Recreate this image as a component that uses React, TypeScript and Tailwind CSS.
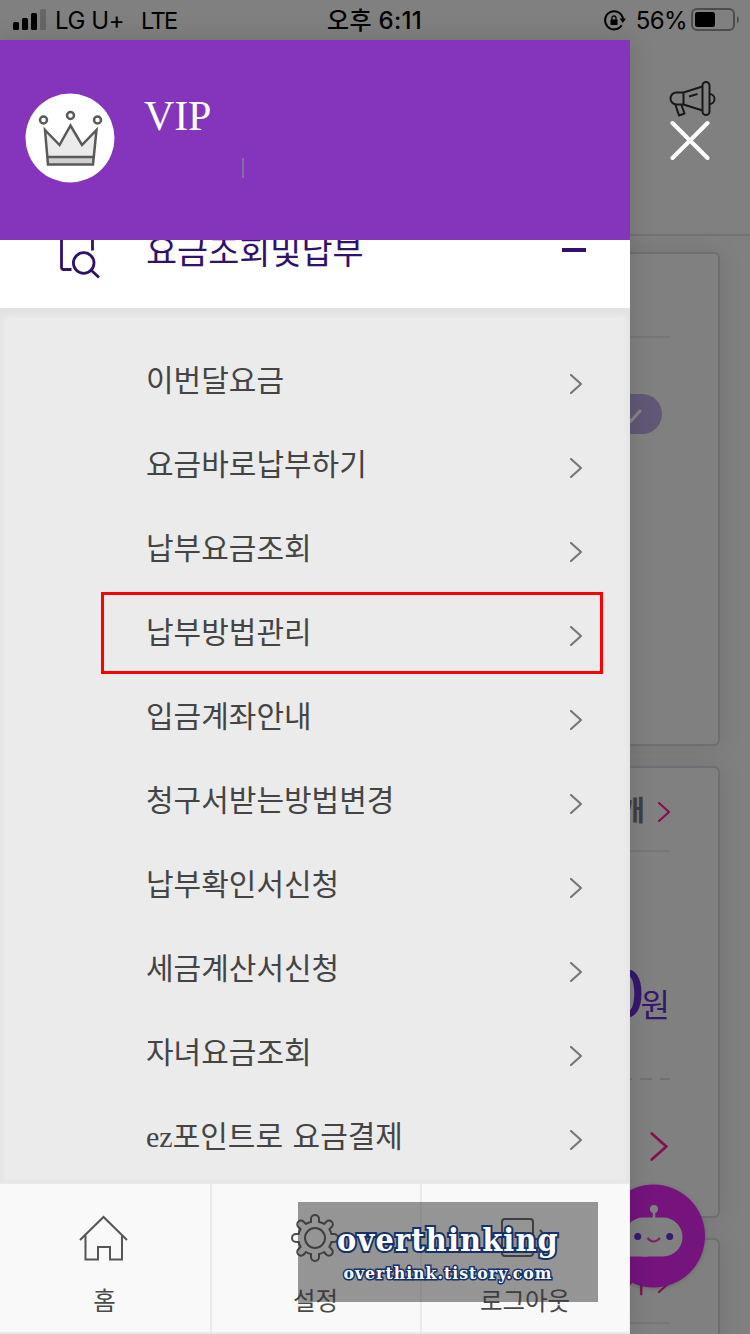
import React from 'react';

// ===== TYPE DEFINITIONS =====
interface MenuItem {
  label: string;
  highlighted?: boolean;
}

const menuItems: MenuItem[] = [
  { label: '이번달요금' },
  { label: '요금바로납부하기' },
  { label: '납부요금조회' },
  { label: '납부방법관리', highlighted: true },
  { label: '입금계좌안내' },
  { label: '청구서받는방법변경' },
  { label: '납부확인서신청' },
  { label: '세금계산서신청' },
  { label: '자녀요금조회' },
  { label: 'ez포인트로 요금결제' },
];

const Chevron: React.FC<{ className: string; strokeWidth?: number }> = ({ className, strokeWidth = 2 }) => (
  <svg viewBox="0 0 12 20" fill="none" stroke="currentColor" strokeWidth={strokeWidth} strokeLinecap="round" className={className}>
    <path d="M1 1l10 9-10 9" />
  </svg>
);

const StatusBar = () => (
  <div className="relative flex h-10 shrink-0 items-center justify-between bg-[#808080] pl-[13px] pr-[11px] font-['Inter','Noto_Sans_CJK_KR',sans-serif] text-[24px] leading-10 text-black">
    <div className="flex items-center">
      <svg width="34" height="22" viewBox="0 0 34 22" className="mr-2">
        <rect x="0" y="13" width="6" height="8" rx="1.5" />
        <rect x="9" y="9" width="6" height="12" rx="1.5" />
        <rect x="18" y="4" width="6" height="17" rx="1.5" />
        <rect x="27" y="0" width="6" height="21" rx="1.5" fill="#666" />
      </svg>
      <span className="w-[86px] pt-0.5 tracking-[-0.4px]">LG U+</span>
      <span className="pt-0.5 text-[23.5px] tracking-[-1.6px]">LTE</span>
    </div>
    <div className="absolute left-[327px] top-px whitespace-nowrap font-medium tracking-[0.3px]">오후 6:11</div>
    <div className="flex items-center">
      <svg width="22" height="22" viewBox="0 0 22 22" className="mr-[10px] mt-0.5">
        <path d="M17.7 15.2A9 9 0 1 1 19 9" fill="none" stroke="#000" strokeWidth="2" />
        <path d="M15.6 8.5h6.4l-3.200 4.600z" />
        <rect x="6.5" y="9.5" width="7" height="5.5" rx="0.8" />
        <path d="M8 10V8a2 2 0 0 1 4 0v2" fill="none" stroke="#000" strokeWidth="1.3" />
      </svg>
      <span className="mr-[4px] pt-0.5 tracking-[-0.6px]">56%</span>
      <svg width="48" height="24" viewBox="0 0 48 24">
        <rect x="1" y="1" width="42" height="21" rx="5" fill="none" stroke="#4d4d4d" strokeWidth="2" />
        <rect x="4" y="4" width="20" height="15" rx="2.5" />
        <path d="M46 8q2 1 2 3.500t-2 3.500z" fill="#4d4d4d" />
      </svg>
    </div>
  </div>
);

const CrownBadge = () => (
  <svg width="90" height="90" viewBox="0 0 90 90">
    <circle cx="45" cy="45" r="44.500" fill="#fff" />
    <path d="M20 38l14.500 14L45.500 33 57 52l14-14-3 33H23z" fill="#ebebeb" />
    <path d="M22.500 64h46l-.8 7.500h-44.500z" fill="#d0d0d0" />
    <g fill="none" stroke="#595959" strokeWidth="2.500">
      <path d="M20 37l14.500 15L45.500 32.500 57 52l14.500-15-3.500 34.500H23z" />
      <path d="M22 64h46" />
      <circle cx="18.500" cy="27" r="3.500" />
      <circle cx="45.500" cy="22.500" r="3.500" />
      <circle cx="72.500" cy="27" r="3.500" />
    </g>
  </svg>
);

const Drawer = () => (
  <div className="relative z-10 flex h-[1294px] w-[630px] shrink-0 flex-col bg-white shadow-[0_0_24px_rgba(0,0,0,0.14)]">
    <div className="z-10 flex h-[200px] shrink-0 bg-[#8534bc] pl-[25px] pt-[53px]">
      <CrownBadge />
      <div className="ml-[29px] flex flex-col">
        <span className="h-[47px] font-['Liberation_Serif',serif] text-[42px] leading-[47px] tracking-[-0.2px] text-white">VIP</span>
        <span className="ml-[98px] mt-[18px] h-5 w-0.5 bg-[#856aa9]" />
      </div>
    </div>

    <div className="flex h-[942px] shrink-0 flex-col overflow-hidden">
      {/* Section header, scrolled partly under the profile bar */}
      <div className="-mt-12 flex h-[116px] shrink-0 items-center pl-[58px] pr-11 text-[#31116b]">
        <svg width="44" height="56" viewBox="0 0 44 56" fill="none" stroke="currentColor" strokeWidth="2.800" className="mt-0.5">
          <path d="M13.500 46.500H5.500a2 2 0 0 1-2-2V4h31v23.500" />
          <circle cx="25.700" cy="40" r="10.300" />
          <path d="M33 47l8 7.500" />
        </svg>
        <span className="ml-11 grow text-[33.800px] leading-[50px]">요금조회및납부</span>
        <span className="h-1 w-6 bg-[#31116b]" />
      </div>

      <ul className="h-[874px] border-t-[3px] border-[#e2e1e6] bg-[#ebebeb] pt-[31px] shadow-[inset_0_2px_8px_rgba(0,0,0,0.06)]">
        {menuItems.map((item) => (
          <li key={item.label} className="relative flex h-[84px] items-center pl-[146px] pr-12">
            {item.highlighted && <div className="absolute -top-0.5 left-[101px] h-[82px] w-[502px] border-[3px] border-[#ff0000]" />}
            <span className="grow pb-[6px] font-['Liberation_Serif','Noto_Sans_CJK_KR',sans-serif] text-[30px] leading-[44px] text-[#444] [word-spacing:2px]">
              {item.label}
            </span>
            <Chevron strokeWidth={2.2} className="h-5 w-3 text-[#777]" />
          </li>
        ))}
      </ul>
    </div>

    <div className="grid h-[152px] grid-cols-[212px_210px_208px] border-y-2 border-[#e9e9e9] bg-[#f9f9f9] text-[24.500px] leading-[34px] text-[#4a4a4a]">
      <div className="flex flex-col items-center border-r-2 border-[#e9e9e9] pt-[31px]">
        <svg width="50" height="48" viewBox="0 0 50 48" fill="none" stroke="#555" strokeWidth="2" className="-ml-0.5">
          <path d="M1 25L24.500 2 48 25M6.500 20.500v24H19V32h12v12.500h12v-24" />
        </svg>
        <span className="-ml-px mt-5">홈</span>
      </div>
      <div className="flex flex-col items-center border-r-2 border-[#e9e9e9] pt-[30px]">
        <svg width="48" height="48" viewBox="0 0 48 48" fill="none" stroke="#4d4d4d" strokeWidth="2" strokeLinejoin="round" className="-ml-0.5">
          <circle cx="24" cy="24" r="10" />
          <path d="M20 8V5a4 4 0 0 1 8 0v3q3 .5 5 2l2.300-2.300a3.700 3.700 0 0 1 5.400 5.300L38.300 15.200q1.500 2 2 4.800H43a4 4 0 0 1 0 8h-2.700q-.5 2.800-2 4.800l2.400 2.400a3.700 3.700 0 0 1-5.400 5.300L33 38q-2 1.500-5 2v3a4 4 0 0 1-8 0v-3q-3-.5-5-2l-2.300 2.500a3.700 3.700 0 0 1-5.400-5.300l2.400-2.400q-1.500-2-2-4.800H5a4 4 0 0 1 0-8h2.700q.5-2.800 2-4.800L7.300 13a3.700 3.700 0 0 1 5.400-5.300L15 10q2-1.500 5-2z" />
        </svg>
        <span className="-ml-px mt-[21px]">설정</span>
      </div>
      <div className="flex flex-col items-center border-r border-[#e9e9e9] pt-[30px]">
        <svg width="48" height="48" viewBox="0 0 48 48" fill="none" stroke="#4d4d4d" strokeWidth="2" className="-ml-0.5">
          <rect x="1" y="5" width="31" height="37" rx="3" />
          <path d="M18 25h26M39 16l7 8-7 8" />
        </svg>
        <span className="-ml-px mt-[21px]">로그아웃</span>
      </div>
    </div>
  </div>
);

// Visible strip of the page under the dimmed overlay
const DimmedPage = () => (
  <div className="relative flex h-[1294px] w-[120px] flex-col overflow-hidden">
    <div className="flex h-[196px] shrink-0 flex-col items-center border-b-2 border-[#727272] pt-[40px]">
      <svg width="48" height="38" viewBox="0 0 48 38" fill="none" stroke="#181818" strokeWidth="2" strokeLinejoin="round" className="ml-[5px]">
        <rect x="33.500" y="2" width="7" height="33" rx="3.500" />
        <path d="M33.500 6.500L14.500 12.500v12l19 6M14.500 12.500H7.500a6 6 0 0 0 0 12h7zM6.500 25l3.500 10.500 5.500-2-3-8.500M40.500 14a5 5 0 0 1 0 10M20 16.500l8.500-2.500" />
      </svg>
      <svg width="40" height="40" viewBox="0 0 40 40" stroke="#fff" strokeWidth="4" strokeLinecap="round" className="mt-[2px]">
        <path d="M2.500 3l35 35M37.500 3l-35 35" />
      </svg>
    </div>

    <div className="-ml-5 mt-4 h-[494px] w-[110px] shrink-0 rounded-md border-2 border-[#6f6e73] pt-[82px] shadow-[0_0_24px_rgba(0,0,0,0.1)]">
      <div className="h-0.5 w-[58px] bg-[#777]" />
      <div className="mt-14 flex h-10 w-[50px] items-center justify-center rounded-r-full bg-[#605876]">
        <svg width="22" height="16" viewBox="0 0 22 16" fill="none" stroke="#858585" strokeWidth="3" strokeLinecap="round" className="-ml-3 mt-1">
          <path d="M2 4l9 9 9-10" />
        </svg>
      </div>
    </div>

    <div className="-ml-5 mt-5 flex h-[452px] w-[110px] shrink-0 flex-col rounded-md border-2 border-[#6f6e73] pr-12 shadow-[0_0_24px_rgba(0,0,0,0.1)]">
      <div className="flex h-[84px] items-center justify-end gap-[15px] border-b-2 border-[#777]">
        <span className="text-[28px] font-bold leading-10 tracking-[-2px] text-[#3f3f3f]">개</span>
        <Chevron strokeWidth={2.2} className="mt-1.5 h-5 w-3 shrink-0 text-[#830f4f]" />
      </div>
      <div className="mt-24 flex h-[86px] items-baseline justify-end text-[#35176c]">
        <span className="-mr-1 text-[66px] font-medium leading-[80px]">0</span>
        <span className="text-[32px] leading-[80px]">원</span>
      </div>
      <svg width="60" height="2" viewBox="0 0 60 2" className="-ml-0.5 mt-[44px] shrink-0">
        <path d="M0 1h22M30 1h12M50 1h10" stroke="#727272" strokeWidth="2" />
      </svg>
      <Chevron strokeWidth={1.8} className="ml-[38px] mt-[52px] h-[29px] w-[18px] shrink-0 text-[#830f4f]" />
    </div>

    <div className="-ml-5 mt-5 h-[110px] w-[110px] shrink-0 rounded-md border-2 border-[#6f6e73] pr-12 shadow-[0_0_24px_rgba(0,0,0,0.1)]">
      <div className="flex h-[84px] items-center justify-end gap-3 border-b-2 border-[#777] text-[#830f4f]">
        <span className="text-[28px] leading-10">기</span>
        <Chevron className="mt-1 h-5 w-3 shrink-0" />
      </div>
    </div>

    {/* Chatbot button */}
    <svg width="104" height="104" viewBox="0 0 104 104" className="absolute -left-7 top-[1144px] drop-shadow-[0_1px_2px_rgba(0,0,0,0.2)]">
      <circle cx="51.500" cy="52" r="51.500" fill="#74147c" />
      <rect x="22" y="33.500" width="58.500" height="39" rx="19.500" fill="#808080" />
      <path d="M22 53v19.500h24z" fill="#808080" />
      <circle cx="52" cy="25" r="4" fill="#808080" />
      <path d="M52 26v9" stroke="#808080" strokeWidth="2.500" />
      <circle cx="35.700" cy="52.500" r="3.500" fill="#361b6d" />
      <circle cx="67.700" cy="52.500" r="3.500" fill="#361b6d" />
      <path d="M45.500 54q6 7 12.500 0" fill="none" stroke="#7d1f66" strokeWidth="2" />
    </svg>
  </div>
);

const Watermark = () => (
  <div className="absolute left-[298px] top-[1202px] z-20 flex h-[100px] w-[300px] flex-col items-center bg-[#323234]/50 pt-[19px] font-['DejaVu_Serif_Condensed','DejaVu_Serif',serif] font-bold text-white">
    <span className="text-[32px] leading-[38px] tracking-[1.2px] [paint-order:stroke_fill] [-webkit-text-stroke:4px_#14316b]">overthinking</span>
    <span className="text-[17.500px] leading-[28px] tracking-[1px] [paint-order:stroke_fill] [-webkit-text-stroke:3px_#14316b]">
      overthink.tistory.com
    </span>
  </div>
);

const App: React.FC = () => {
  return (
    <div className="relative flex h-[1334px] w-[750px] flex-col overflow-hidden bg-[#808080] font-['Noto_Sans_CJK_KR',sans-serif]">
      <StatusBar />
      <div className="flex">
        <Drawer />
        <DimmedPage />
      </div>
      <Watermark />
    </div>
  );
};

export default App;
